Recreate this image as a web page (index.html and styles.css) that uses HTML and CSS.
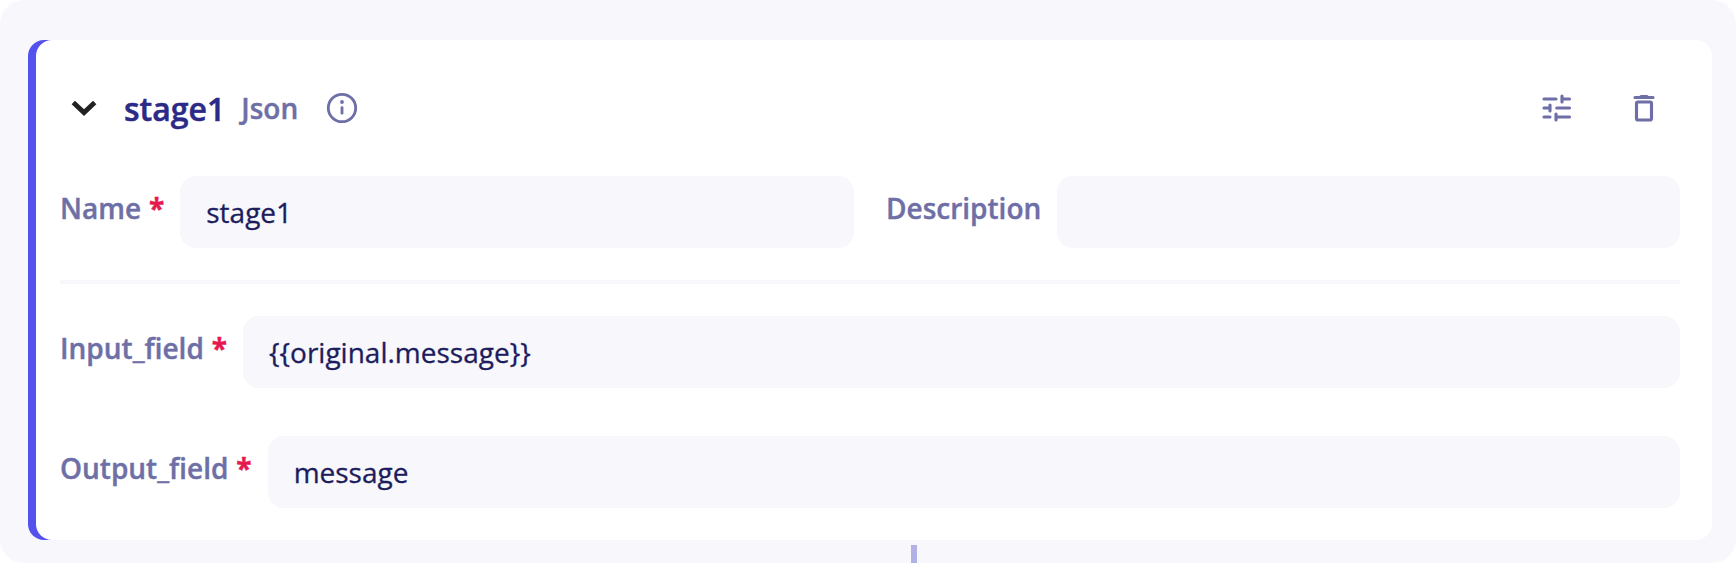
FILE: index.html
```html
<!DOCTYPE html>
<html lang="en">
<head>
<meta charset="utf-8">
<title>Stage</title>
<link rel="stylesheet" href="styles.css">
</head>
<body>
<main class="panel">
  <section class="card">
    <header class="card-header">
      <svg class="chevron" viewBox="0 0 26 18"><path d="M2.3 3.4 13 13.6 23.7 3.4"/></svg>
      <h1 class="title">stage1</h1>
      <span class="type">Json</span>
      <svg class="info" viewBox="0 0 36 36"><circle cx="18" cy="18" r="13.7"/><path d="M18 17.6v5.6"/><circle class="dot" cx="18" cy="12" r="1.9"/></svg>
      <div class="actions">
        <svg class="icon" viewBox="0 0 24 24"><path d="M4 6h8M17 6h4M16 4v4M4 12h3M8 10v4M12.5 12H21M4 18h4M12 18h9M12 16v4"/></svg>
        <svg class="icon" viewBox="0 0 24 24"><path d="M6 5h12M10 4.3h4"/><rect x="7" y="8" width="10" height="12" rx="1"/></svg>
      </div>
    </header>
    <div class="row-split">
      <div class="field field-name"><label class="label" for="name">Name <span class="req">*</span></label><input class="input" id="name" value="stage1"></div>
      <div class="field field-desc"><label class="label" for="desc">Description</label><input class="input" id="desc"></div>
    </div>
    <hr class="divider">
    <div class="field"><label class="label" for="in">Input_field <span class="req">*</span></label><input class="input" id="in" value="{{original.message}}"></div>
    <div class="field field-out"><label class="label" for="out">Output_field <span class="req">*</span></label><input class="input" id="out" value="message"></div>
  </section>
  <div class="connector"></div>
</main>
</body>
</html>
```
FILE: styles.css
```css
* { box-sizing: border-box; }
body { margin: 0; background: #fff; font-family: "Open Sans", "Noto Sans", sans-serif; }
.panel { height: 563px; padding: 40px 24px 0 28px; background: #f7f7fc; border-radius: 24px; overflow: hidden; }
.card { height: 500px; margin-left: 8px; padding: 32px 32px 0 24px; background: #fff; border-radius: 16px; box-shadow: -8px 0 0 #5551ec; }
.card-header { display: flex; align-items: center; height: 72px; padding: 0 18px 0 11px; }
.chevron { width: 26px; height: 18px; fill: none; stroke: #222; stroke-width: 4.8; overflow: visible; }
.title { margin: 2px 0 0 27px; font-size: 32px; font-weight: 600; line-height: 44px; color: #2b2a86; -webkit-text-stroke: 0.5px; }
.type { margin-left: 16px; font-size: 28px; font-weight: 600; line-height: 40px; color: #6e6fa6; -webkit-text-stroke: 0.4px; }
.info { width: 36px; height: 36px; margin-left: 26px; fill: none; stroke: #6e6fa6; stroke-width: 2.8; stroke-linecap: round; }
.info .dot { fill: #6e6fa6; stroke: none; }
.actions { display: flex; gap: 52px; margin-left: auto; }
.icon { width: 36px; height: 36px; fill: none; stroke: #6e6fa6; stroke-width: 2.1; stroke-linecap: round; stroke-linejoin: round; }
.row-split { display: flex; gap: 32px; margin-top: 32px; }
.field { display: flex; align-items: flex-start; }
.field-name { width: 794px; }
.field-desc { flex: 1; }
.field-out { margin-top: 48px; }
.label { margin: 12px 16px 0 0; font-size: 28px; font-weight: 600; line-height: 40px; white-space: nowrap; color: #6e6fa6; -webkit-text-stroke: 0.4px; }
.req { margin-left: 0.7px; font-weight: 700; color: #e6194f; }
.input { flex: 1; min-width: 0; height: 72px; padding: 0 26px; border: 0; border-radius: 16px; outline: 0; background: #f7f7fc; font: 400 28px "Open Sans", "Noto Sans", sans-serif; color: #1d1c5c; -webkit-text-stroke: 0.3px; }
.divider { height: 4px; margin: 32px 0; border: 0; background: #f7f7fc; }
.connector { width: 6px; height: 18px; margin: 5px 0 0 883px; background: #b2b1e6; }
```
